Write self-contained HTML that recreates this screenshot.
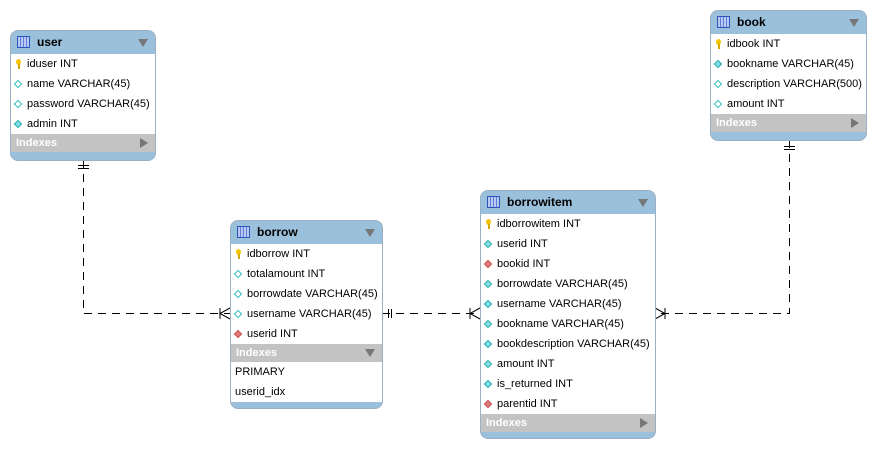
<!DOCTYPE html>
<html><head><meta charset="utf-8"><style>
body{margin:0;width:877px;height:450px;background:#fff;position:relative;font-family:"Liberation Sans",sans-serif;overflow:hidden}
.t{position:absolute;border:1px solid #9ab0c4;border-radius:8px;background:#9bc0dc;overflow:hidden;box-sizing:border-box}
.h{height:22px;position:relative;font-weight:bold;font-size:12px;line-height:23px;padding-left:26px;color:#000;border-bottom:1px solid #9bc0dc}
.h .ic{position:absolute;left:6px;top:5px;width:13px;height:12px;border:1px solid #2b55b8;background:repeating-linear-gradient(90deg,#b9c9f3 0 2px,#5d7fd6 2px 3px);box-sizing:border-box}
.h .ar,.ix .ar{position:absolute;right:7px;top:8px;width:0;height:0;border-left:5px solid transparent;border-right:5px solid transparent;border-top:8px solid #777}
.body{background:#fff}
.r{height:20px;line-height:20px;font-size:11px;padding-left:16px;position:relative;color:#000;white-space:nowrap}
.r.p{padding-left:4px}
.d{position:absolute;left:4px;top:7px;width:6px;height:6px;transform:rotate(45deg);box-sizing:border-box}
.o{border:1px solid #3bb;background:#fff}
.c{background:#7de0e8;border:1px solid #3aa}
.rd{background:#e07a7a;border:1px solid #c55}
.k{position:absolute;left:5px;top:5px;width:5px;height:6px;border-radius:50%;background:#f4c400}
.k:after{content:"";position:absolute;left:2px;top:5px;width:2px;height:5px;background:#d9a800}
.ix{height:18px;line-height:18px;background:#c3c3c3;color:#fff;font-weight:bold;font-size:11px;padding-left:5px;position:relative}
.ix .ar{top:5px}
.ix .rt{position:absolute;right:7px;top:4px;width:0;height:0;border-top:5px solid transparent;border-bottom:5px solid transparent;border-left:8px solid #777}
</style></head><body>
<svg style="position:absolute;left:0;top:0" width="877" height="450">
<g stroke="#000" stroke-width="1" fill="none">
<path d="M83.5 160 V313.5 H230" stroke-dasharray="8,6"/>
<path d="M382 313.5 H480" stroke-dasharray="8,6"/>
<path d="M789.5 140 V313.5 H655" stroke-dasharray="8,6"/>
<path d="M78 165.5H89M78 168.5H89"/>
<path d="M784 146.5H795M784 149.5H795"/>
<path d="M230 308L220 313.5L230 319M220 308V319"/>
<path d="M480 308L470 313.5L480 319M470 308V319"/>
<path d="M655 308L665 313.5L655 319M665 308V319"/>
<path d="M388.5 309V318M391.5 309V318"/>
</g></svg>

<div class="t" style="left:10px;top:30px;width:146px;height:131px">
<div class="h"><span class="ic"></span>user<span class="ar"></span></div>
<div class="body">
<div class="r"><span class="k"></span>iduser INT</div>
<div class="r"><span class="d o"></span>name VARCHAR(45)</div>
<div class="r"><span class="d o"></span>password VARCHAR(45)</div>
<div class="r"><span class="d c"></span>admin INT</div>
</div>
<div class="ix">Indexes<span class="rt"></span></div>
</div>

<div class="t" style="left:710px;top:10px;width:157px;height:131px">
<div class="h"><span class="ic"></span>book<span class="ar"></span></div>
<div class="body">
<div class="r"><span class="k"></span>idbook INT</div>
<div class="r"><span class="d c"></span>bookname VARCHAR(45)</div>
<div class="r"><span class="d o"></span>description VARCHAR(500)</div>
<div class="r"><span class="d o"></span>amount INT</div>
</div>
<div class="ix">Indexes<span class="rt"></span></div>
</div>

<div class="t" style="left:230px;top:220px;width:153px;height:189px">
<div class="h"><span class="ic"></span>borrow<span class="ar"></span></div>
<div class="body">
<div class="r"><span class="k"></span>idborrow INT</div>
<div class="r"><span class="d o"></span>totalamount INT</div>
<div class="r"><span class="d o"></span>borrowdate VARCHAR(45)</div>
<div class="r"><span class="d o"></span>username VARCHAR(45)</div>
<div class="r"><span class="d rd"></span>userid INT</div>
</div>
<div class="ix">Indexes<span class="ar"></span></div>
<div class="body">
<div class="r p">PRIMARY</div>
<div class="r p">userid_idx</div>
</div>
</div>

<div class="t" style="left:480px;top:190px;width:176px;height:249px">
<div class="h"><span class="ic"></span>borrowitem<span class="ar"></span></div>
<div class="body">
<div class="r"><span class="k"></span>idborrowitem INT</div>
<div class="r"><span class="d c"></span>userid INT</div>
<div class="r"><span class="d rd"></span>bookid INT</div>
<div class="r"><span class="d c"></span>borrowdate VARCHAR(45)</div>
<div class="r"><span class="d c"></span>username VARCHAR(45)</div>
<div class="r"><span class="d c"></span>bookname VARCHAR(45)</div>
<div class="r"><span class="d c"></span>bookdescription VARCHAR(45)</div>
<div class="r"><span class="d c"></span>amount INT</div>
<div class="r"><span class="d c"></span>is_returned INT</div>
<div class="r"><span class="d rd"></span>parentid INT</div>
</div>
<div class="ix">Indexes<span class="rt"></span></div>
</div>
</body></html>
